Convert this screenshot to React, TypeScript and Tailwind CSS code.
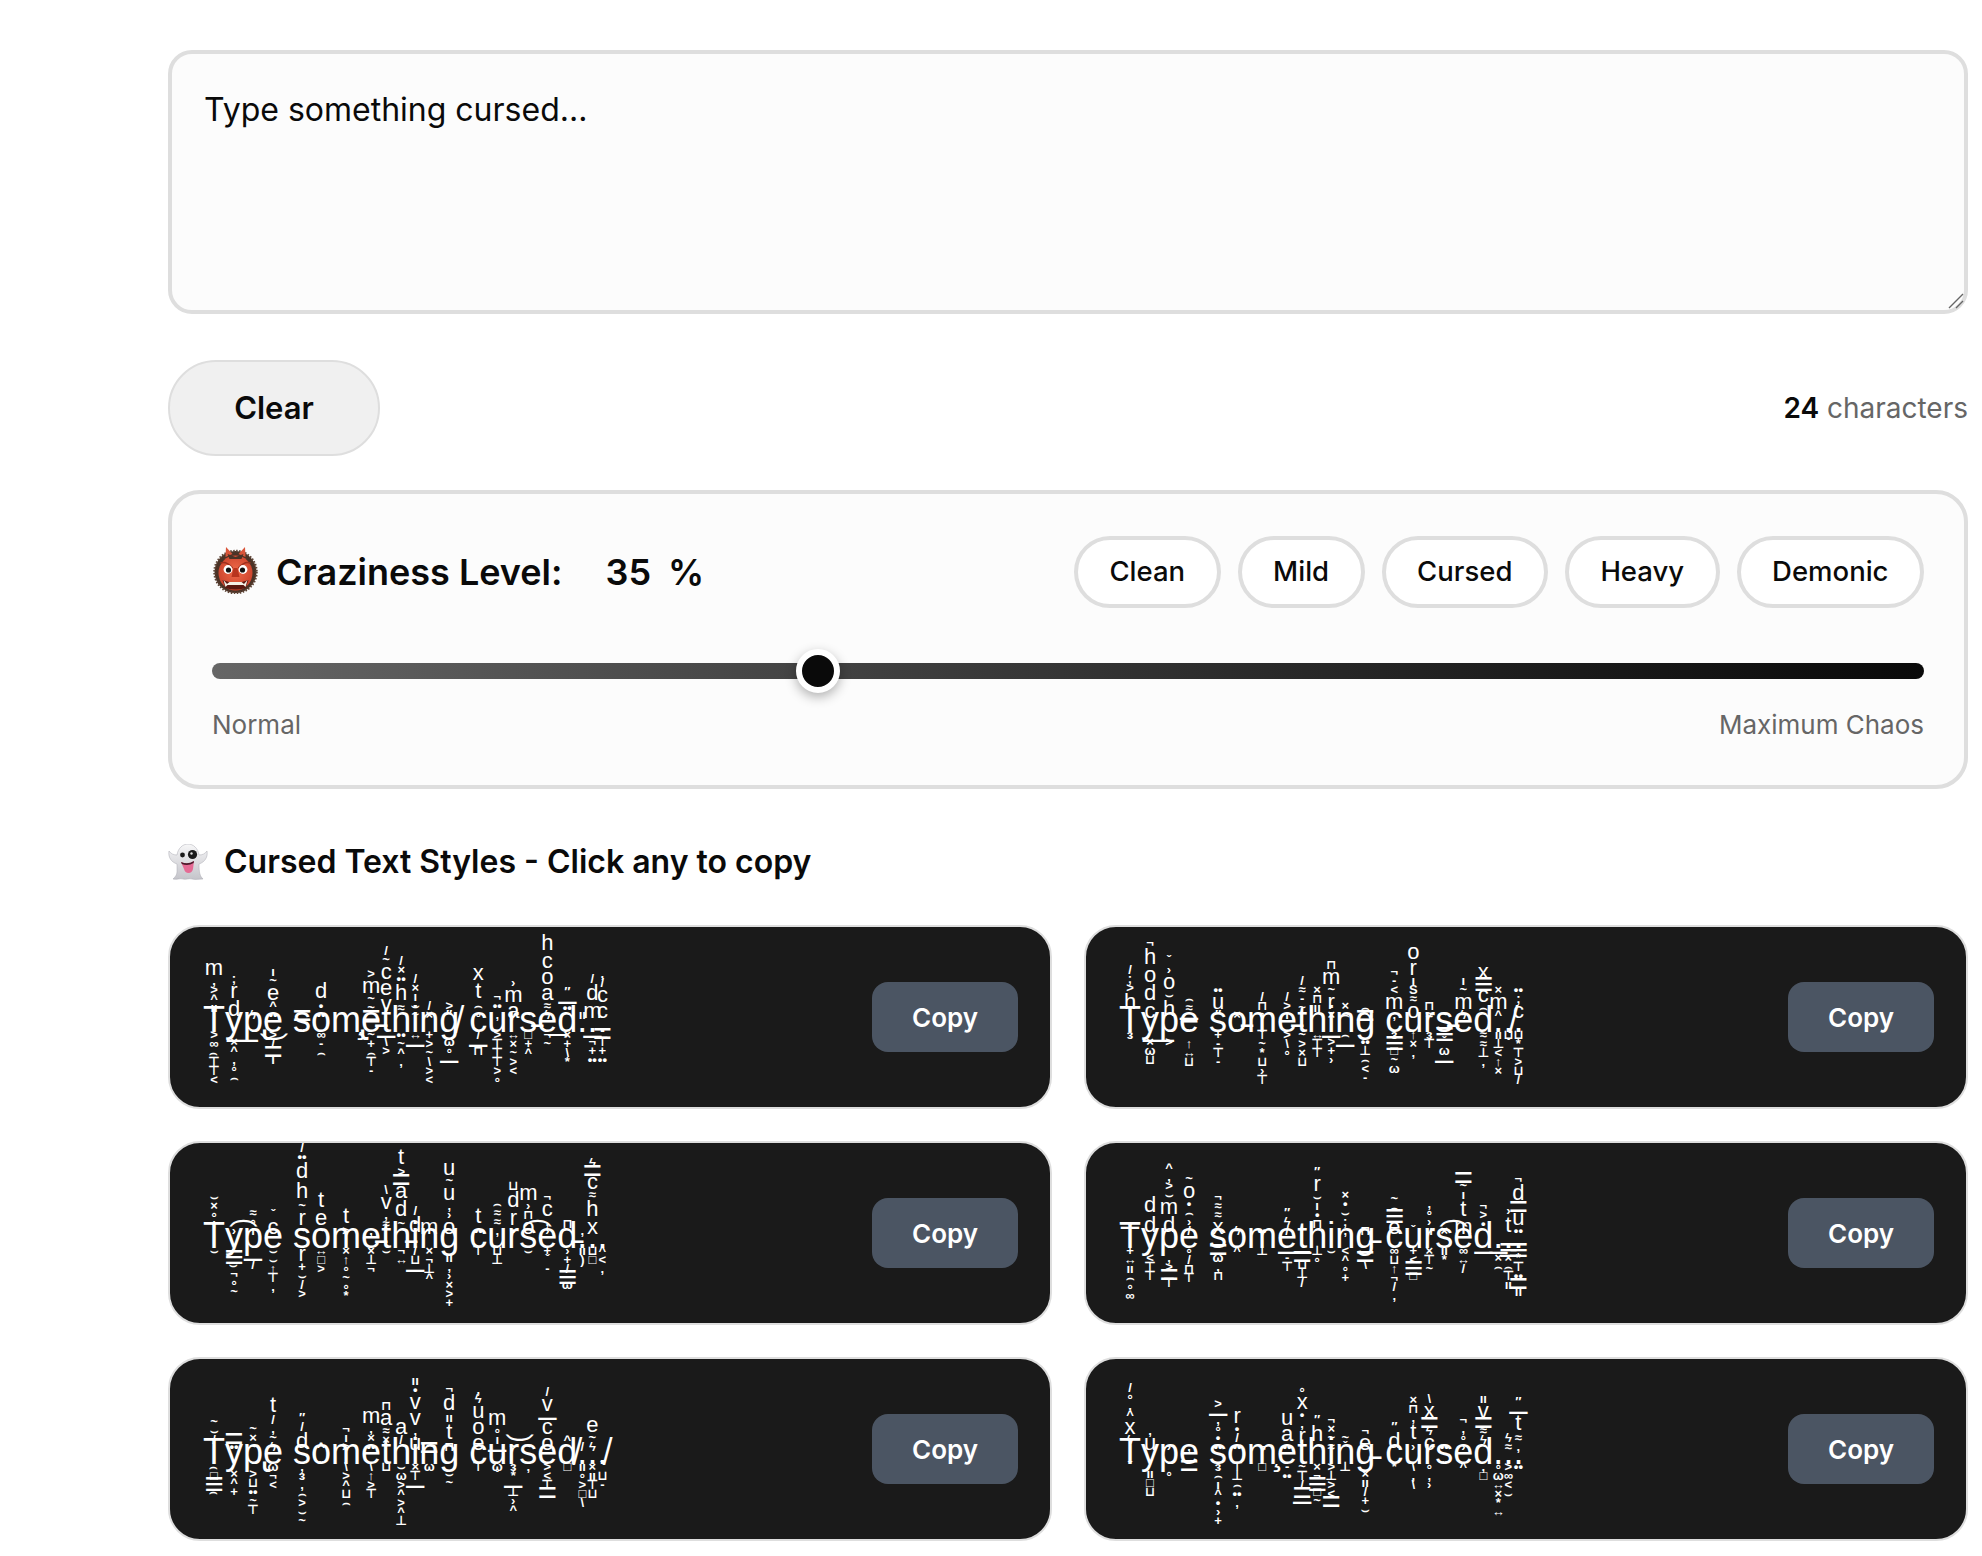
import { useState } from "react";

// stacked marks: mnemonic -> glyph, sized by kind
const SMALL: Record<string, string> = {
  ">": ">", "<": "<", "^": "^", V: "ˇ", "~": "~", w: "≈", n: "⌢", s: "⌣", ".": "•", ":": "••", "0": "∘", "/": "/", "\\": "\\",
  '"': "″", ",": ",", ";": ";", X: "×", "?": "›", z: "ϟ", B: "⊓", U: "⊔", L: "¬", T: "⊤", A: "⊥", "+": "+", "-": "-", "|": "ı",
  I: "ıı", "8": "∞", q: "□", x: "↔", y: "↑", "*": "*", W: "ω", "3": "ɜ",
};
const BARS: Record<string, string> = { "=": "=", "#": "≡", _: "–" };
const MID: Record<string, number> = {
  "-": 0x335, _: 0x336, k: 0x322, e: 0x327, u: 0x35c, n: 0x35d, M: 0x35f, N: 0x361, A: 0x362, "/": 0x338,
};

type Cell = [string, string?, string?, string?];

function Mark({ k }: { k: string }) {
  if (BARS[k]) return <span className="block h-[7px] text-[33px] leading-[7px]">{BARS[k]}</span>;
  if ("dht".includes(k)) return <span className="block h-[20px] text-[22px] leading-[20px]">{k}</span>;
  if ("aceimoruv".includes(k)) return <span className="block h-[16px] text-[22px] leading-[16px]">{k}</span>;
  return <span className="block h-[9px] text-[13px] font-bold leading-[9px]">{SMALL[k] ?? k}</span>;
}

// lowercase x in a stack is the letter x above the base and an arrow below it
function Letter({ cell }: { cell: Cell }) {
  const [base, up = "", down = "", mid = ""] = cell;
  const tall = "Tthd".includes(base);
  const deep = "ypg".includes(base);
  const midMarks = Array.from(mid).map((c) => String.fromCodePoint(MID[c])).join("");
  return (
    <span className="relative inline-block whitespace-pre">
      {base + midMarks}
      {up && (
        <span className={`absolute left-1/2 flex -translate-x-1/2 flex-col-reverse items-center ${tall ? "bottom-[35px]" : "bottom-[28px]"}`}>
          {Array.from(up).map((k, i) =>
            k === "x" ? (
              <span key={i} className="block h-[16px] text-[22px] leading-[16px]">x</span>
            ) : (
              <Mark key={i} k={k} />
            )
          )}
        </span>
      )}
      {down && (
        <span className={`absolute left-1/2 flex -translate-x-1/2 flex-col items-center ${deep ? "top-[44px]" : "top-[37px]"}`}>
          {Array.from(down).map((k, i) => (
            <Mark key={i} k={k} />
          ))}
        </span>
      )}
    </span>
  );
}

const LINES: Cell[][] = [
  [["T", "I^>,m", ">8nTT<"], ["y", "dr;", "X^,0n", "M"], ["p", "z", "", "ku"], ["e", ":^e~|", ">/=|"], [" "],
   ["s", "=", "V"], ["o", ":.d", "8-n"], ["m", ",", "", "ke"], ["e", "=~~m>", "~+nT-", "-"], ["t", "vec~/", "_\\>"],
   ["h", "wh:X/", ":~^,"], ["i", "~s|X/", "x_"], ["n", "X/", "+>~\\><"], ["g", '">', "W0_", "/"], [" "],
   ["c", "0ntx", "/_B"], ["u", ",:L", ">TTT>0"], ["r", "am?", "xX~><"], ["s", "~", "q+^", "-"], ["e", "zwaoch", "L~", "A"],
   ["d", ':_"', "X+\\*"], [".", "I"], [".", "md/", "_L+:"], [".", "cc/,", "=T+:"]],
  [["T", "h>;/", "3"], ["y", "cdohL", "XWU", "M"], ["p", "hso?V", ">"], ["e", "_wn", "VyxU"], [" "],
   ["s", '"u:', "+-T-"], ["o", "X", "V", "-"], ["m", "0B/", "T~*U?T"], ["e", "|>/", ">\\0", "-"], ["t", "~-w/", "~>XU"],
   ["h", "IBX", "xTT"], ["i", "Xr~mB", "_>+?"], ["n", "nX", "n_"], ["g", "=n", ":An<-"], [" "],
   ["c", ",m<-L", "3#q~W"], ["u", "owS|ro", "yX,"], ["r", "wB", "3T"], ["s", "~", "#VW_", "-"], ["e", "zm~|", ""],
   ["d", "nc#x", "wwA,"], [".", "^mX", "IA<yX"], [".", "", "UV", "/"], [".", "c;:", "U*T>U/"]],
  [["T", "|0Xs", "s"], ["y", "?", "#sL0~", "N"], ["p", "|0w", "_/"], ["e", "cV", "ssyT,"], [" "],
   ["s", "~r~hd:/", "r+s/>"], ["o", "~et", "xq>"], ["m", ">t", "Xy0~0*"], ["e", ",", "XAL", "-"], ["t", "w,v\\", "s"],
   ["h", "~da=>t", "Lx", "-"], ["i", "d/", "/U_"], ["n", "m", "XLA^"], ["g", "o?,u~u", "I,?X>+"], [" "],
   ["c", ":t", "T"], ["u", ",wwn", "UA"], ["r", ".rdU"], ["s", "oB?m", "s", "N"], ["e", "?,cL", "+V-"],
   ["d", "B", "?+/#W", "-"], [".", ",", "I)"], [".", "xhwc=z", "Uq"], [".", "", "^<,"]],
  [["T", "_", "+xIn08"], ["y", "dd", "<TT"], ["p", "dms>,^", ",>=T"], ["e", "/?n.o~", "0/BT"], [" "],
   ["s", "xwwL", "=W,B"], ["o", "z", "^"], ["m", ":", "A"], ["e", '/z"', "_-T"], ["t", "", "_=UA/"],
   ["h", 'B.|sr"', "A0"], ["i", "", "s"], ["n", ",;s.X", "<^0+"], ["g", "B", "=\\", "-"], [" "],
   ["c", "e#n~", "8UyL/,"], ["u", "V", "+<#q"], ["r", "I?0,", "XT~"], ["s", "X", "I*", "N"], ["e", "mt|~=", "8x/"],
   ["d", ".>L", "_"], [".", "", "_Xn"], [".", "t?", "#XnTI"], [".", ":u=dL", "#*T:=I"]],
  [["T", "/s~", "nq#n"], ["y", ":=", "X^+"], ["p", "~X~", ">U:~T", "k"], ["e", "z~,/t", "WL<"], [" "],
   ["s", 'd/"', ",3,n>s~"], ["o", "^", "V"], ["m", ">|L", "\\>^Un"], ["e", ":X,m", "\\y>T"], ["t", "XwaB", "U"],
   ["h", "/a", "sW>^>^A"], ["i", "u,vv.I", "XT_"], ["n", "=", "W"], ["g", "BtIdL", "s~"], [" "],
   ["c", "eouz,", "T"], ["u", "_|0m", "WV"], ["r", "~", "3*_A?^", "n"], ["s", "~", ","], ["e", "oc_v/", "><T="],
   ["d", "^", "q", "/"], [".", "/", "I0>q\\"], [".", "z~e", "XITU"], [".", "", "VU-", "/"]],
  [["T", "zx^,0/", "V"], ["y", "u,", "IqU"], ["p", "?", "0"], ["e", ",", "="], [" "],
   ["s", ":.0,_>", "3n|^.?+"], ["o", ":/.r", "TAn:,"], ["m", "L", "q", "e"], ["e", ":au", "-:"], ["t", "r,.x0", "~T/=_"],
   ["h", 'h"', "XL#q~"], ["i", "w~XL", ">A><="], ["n", "V~", "A"], ["g", "eL", "XI/+s", "-"], [" "],
   ["c", 'd"', "*"], ["u", "?t,BX", "\\,\\"], ["r", "cz=x\\", "0,?"], ["s", ":", "V"], ["e", "?0,L", "^"],
   ["d", "zw=vI", ",q"], [".", "", "0WxX*x"], [".", "wz", ">8<s"], [".", ',wt_"', ":"]],
];

function Ogre() {
  return (
    <svg viewBox="0 0 46 48" className="mb-[4px] h-[48px] w-[47px] shrink-0">
      <defs>
        <radialGradient id="ogreFace" cx="50%" cy="45%" r="60%">
          <stop offset="0%" stopColor="#ef6a4a" />
          <stop offset="100%" stopColor="#c9402a" />
        </radialGradient>
      </defs>
      <ellipse cx="23" cy="26" rx="21" ry="21" fill="#4a3327" stroke="#5d4436" strokeWidth="2.5" strokeDasharray="1.5 1.5" />
      <path d="M13 11 L13.5 1 L20 8 Z M33 11 L32.5 1 L26 8 Z" fill="#d9553a" />
      <ellipse cx="23" cy="27" rx="17" ry="17.5" fill="url(#ogreFace)" />
      <path d="M15 8 L23 11 L31 8 L29 13 L17 13 Z" fill="#4a3327" />
      <path d="M8 17 Q14 15 20 22 M38 17 Q32 15 26 22" stroke="#9c2f1d" strokeWidth="1.6" fill="none" />
      <circle cx="15.5" cy="23.5" r="4.4" fill="#fff" />
      <circle cx="30.5" cy="23.5" r="4.4" fill="#fff" />
      <circle cx="16" cy="24" r="2.6" fill="#111" />
      <circle cx="30" cy="24" r="2.6" fill="#111" />
      <path d="M21 22 L19 31 L27 31 L25 22 Z" fill="#b8351f" />
      <path d="M10 34 Q23 39 36 34 L33 42 Q23 45 13 42 Z" fill="#5a1710" />
      <path d="M11 34 L14.5 38 L17 36 L29 36 L31.5 38 L35 34 L33 41 L31 39 L15 39 L13 41 Z" fill="#f4efe6" />
    </svg>
  );
}

function Ghost() {
  return (
    <svg viewBox="0 0 40 36" className="h-[36px] w-[40px] shrink-0">
      <defs>
        <linearGradient id="ghostBody" x1="0" y1="0" x2="0" y2="1">
          <stop offset="0%" stopColor="#f7f7f8" />
          <stop offset="100%" stopColor="#c4c4ca" />
        </linearGradient>
      </defs>
      <path d="M1 7 C0 13 3 18 9 20 L9 28 C9 31 7 33 5 35 C9 36 12 34 15 35 C18 36 21 34 24 35 C27 36 31 35 35 35 C32 32 31 29 31 20 C37 18 40 13 39 7 C37 10 34 11 31 11 C30 4 25 0 20 0 C15 0 10 4 9 11 C6 11 3 10 1 7 Z" fill="url(#ghostBody)" stroke="#a9a9b0" strokeWidth="0.5" />
      <circle cx="14.5" cy="11" r="2.4" fill="#1a1a1a" />
      <circle cx="24.5" cy="10.5" r="4.6" fill="#1a1a1a" />
      <circle cx="23.5" cy="9.5" r="1.2" fill="#ddd" />
      <path d="M13 18 Q20 21 26 17 L25 25 Q24 29 20.5 29 Q17 29 16 25 Z" fill="#e56a94" />
      <path d="M13 18 Q20 21 26 17 L25.6 19 Q20 22.5 13.8 20 Z" fill="#4a1a2a" />
    </svg>
  );
}

const PRESETS = ["Clean", "Mild", "Cursed", "Heavy", "Demonic"];

export default function App() {
  const [text, setText] = useState("Type something cursed...");
  const [level, setLevel] = useState(35);

  return (
    <div className="min-h-[1556px] overflow-hidden bg-white pl-[168px] pr-[14px] pt-[50px] font-['Inter',sans-serif] text-[#0a0a0a]">
      <div className="relative">
        <textarea
          value={text}
          onChange={(e) => setText(e.target.value)}
          className="block h-[264px] w-full resize-none rounded-[24px] border-4 border-[#dedede] bg-[#fcfcfc] p-[32px] text-[32px] leading-[48px] text-[#0a0a0a] outline-none"
        />
        <svg viewBox="0 0 16 16" className="pointer-events-none absolute bottom-[5px] right-[4px] h-[16px] w-[16px]">
          <path d="M1 15 L15 1 M8 15 L15 8" stroke="#666" strokeWidth="1.4" fill="none" />
        </svg>
      </div>

      <div className="mt-[46px] flex items-center justify-between">
        <button className="h-[96px] w-[212px] rounded-full border-2 border-[#dedede] bg-[#f0f0f0] text-[31px] font-semibold">Clear</button>
        <div className="text-[28px] text-[#666666]">
          <span className="font-semibold text-[#0a0a0a]">24</span> characters
        </div>
      </div>

      <div className="mt-[34px] h-[299px] rounded-[32px] border-4 border-[#dedede] bg-[#fcfcfc] px-[40px] pt-[42px]">
        <div className="flex items-center justify-between">
          <div className="flex items-center text-[36px] font-semibold">
            <Ogre />
            <span className="ml-[17px]">Craziness Level:</span>
            <span className="ml-[43px]">{level}</span>
            <span className="ml-[17px]">%</span>
          </div>
          <div className="flex gap-[17px]">
            {PRESETS.map((p) => (
              <button key={p} className="h-[72px] rounded-full border-4 border-[#dedede] bg-white px-[31.5px] text-[27.5px] font-medium">{p}</button>
            ))}
          </div>
        </div>
        <input
          type="range"
          min={0}
          max={100}
          value={level}
          onChange={(e) => setLevel(Number(e.target.value))}
          className="mt-[55px] block h-[16px] w-full appearance-none rounded-[8px] bg-gradient-to-r from-[#666666] to-[#0a0a0a] [&::-webkit-slider-thumb]:h-[44px] [&::-webkit-slider-thumb]:w-[44px] [&::-webkit-slider-thumb]:appearance-none [&::-webkit-slider-thumb]:rounded-full [&::-webkit-slider-thumb]:border-[6px] [&::-webkit-slider-thumb]:border-white [&::-webkit-slider-thumb]:bg-[#0a0a0a] [&::-webkit-slider-thumb]:shadow-[0_4px_12px_rgba(0,0,0,0.3)]"
        />
        <div className="mt-[26px] flex justify-between text-[26px] text-[#666666]">
          <span>Normal</span>
          <span>Maximum Chaos</span>
        </div>
      </div>

      <div className="mt-[49px] flex items-center text-[32px] font-semibold">
        <Ghost />
        <span className="ml-[16px]">Cursed Text Styles - Click any to copy</span>
      </div>

      <div className="mt-[39px] grid grid-cols-2 gap-x-[32px] gap-y-[32px]">
        {LINES.map((line, i) => (
          <div key={i} className="flex h-[184px] items-center justify-between rounded-[32px] border-2 border-[#dedede] bg-[#1a1a1a] pl-[33px] pr-[32px]">
            <div className="whitespace-nowrap pt-[6px] font-['Liberation_Sans','DejaVu_Sans',sans-serif] text-[36px] text-white">
              {line.map((cell, j) => (
                <Letter key={j} cell={cell} />
              ))}
            </div>
            <button className="h-[70px] w-[146px] rounded-[16px] bg-[#4b5563] text-[26px] font-semibold text-white">Copy</button>
          </div>
        ))}
      </div>
    </div>
  );
}
